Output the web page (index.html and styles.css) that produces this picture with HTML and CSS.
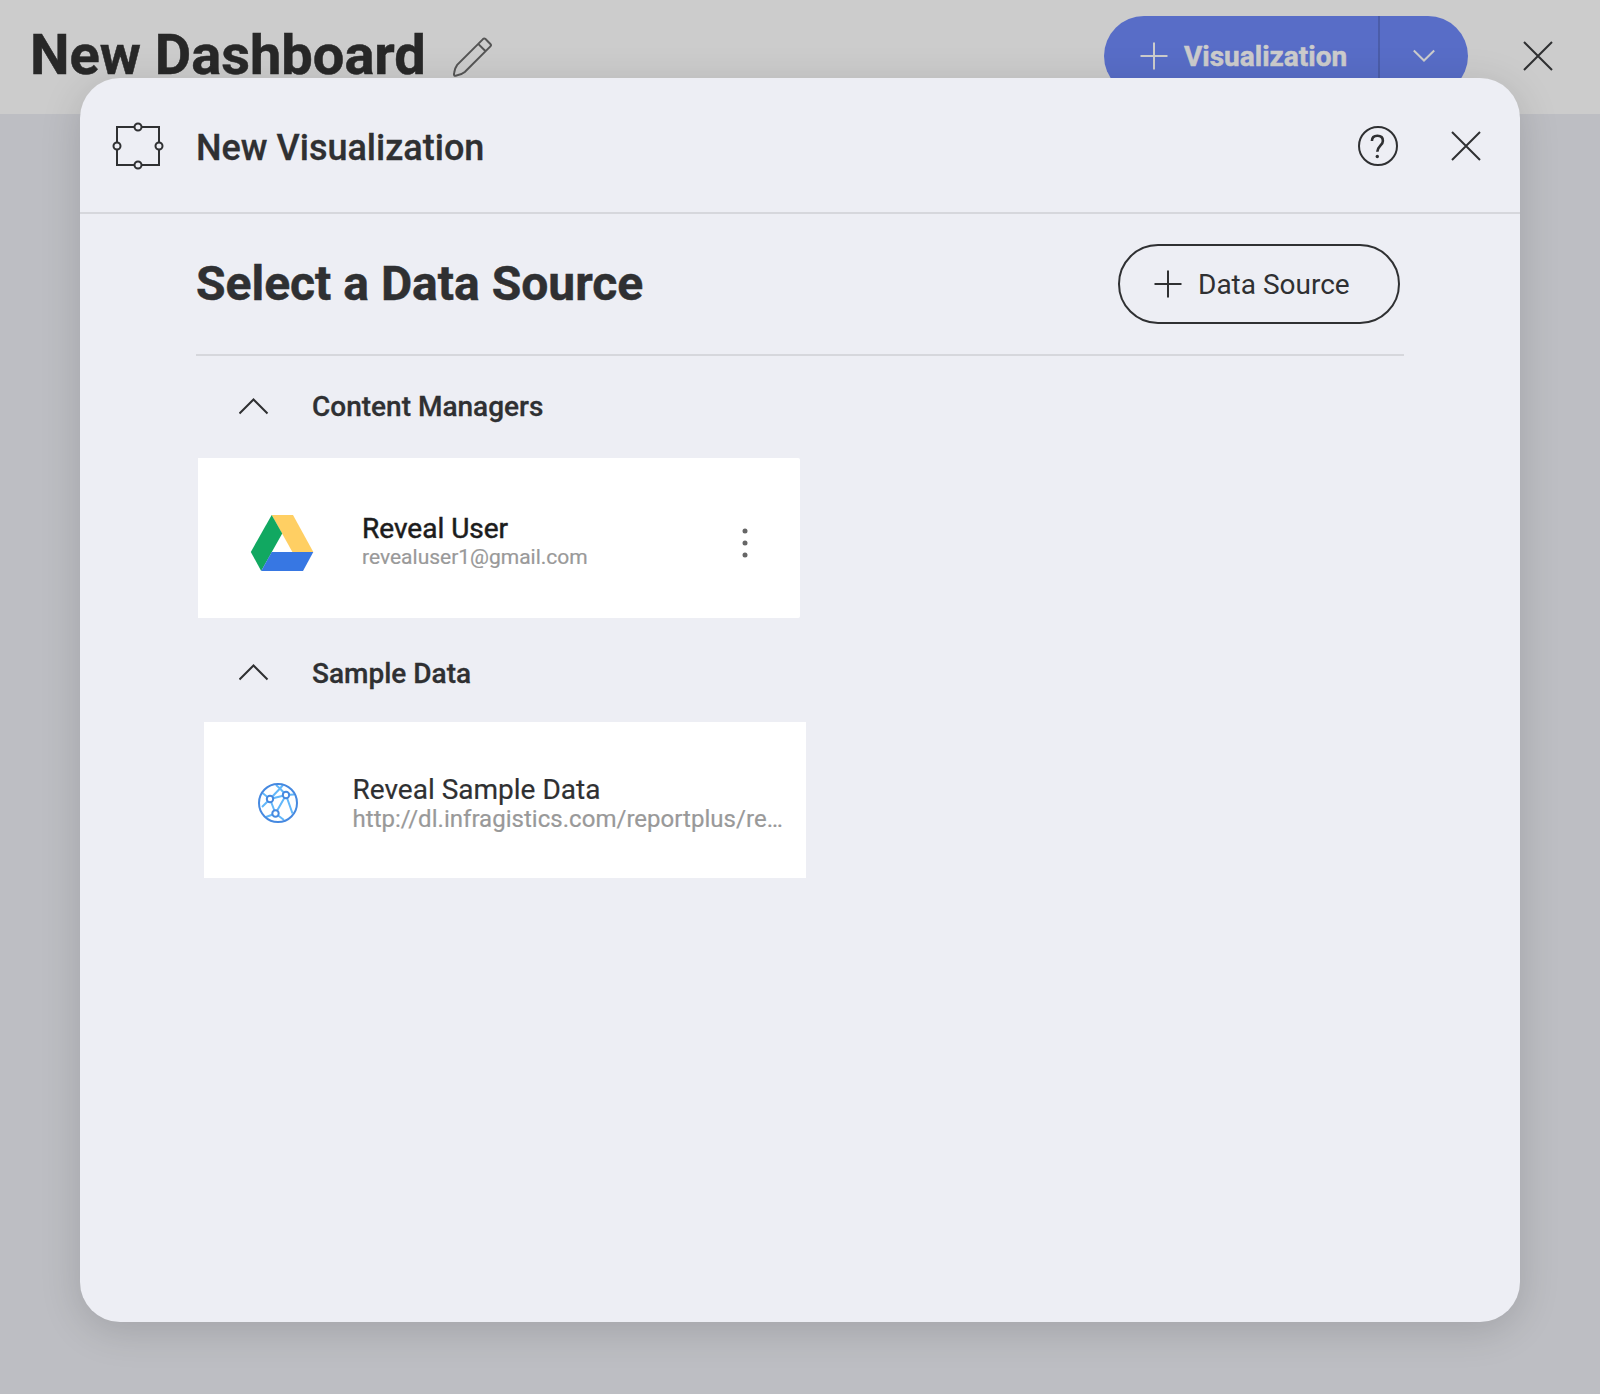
FILE: index.html
```html
<!DOCTYPE html>
<html lang="en">
<head>
<meta charset="utf-8">
<title>New Dashboard</title>
<link rel="stylesheet" href="styles.css">
</head>
<body>
<header class="topbar">
  <h1 class="topbar-title">New Dashboard</h1>
  <svg class="pencil" width="42" height="42" viewBox="0 0 42 42"><path d="M2.4 39.6 Q1.700 38.900 2.100 37 Q2.800 32 5.200 28.800 L31 3.100 Q32.200 2 33.500 3.100 L38.400 8 Q39.600 9.200 38.400 10.400 L12.800 36 Q9.500 38.700 4.500 39.500 Q3 40 2.400 39.600Z M26.200 7.900 L33.600 15.200"/></svg>
  <div class="split-button">
    <div class="split-main">
      <svg class="plus" width="28" height="28" viewBox="0 0 28 28"><path d="M14 .5V27.5M.5 14H27.5"/></svg>
      <span>Visualization</span>
    </div>
    <div class="split-arrow"><svg width="24" height="14" viewBox="0 0 24 14"><path d="M1.8 1.5 L12 11.5 L22.2 1.5"/></svg></div>
  </div>
  <svg class="close" width="30" height="30" viewBox="0 0 30 30"><path d="M1 1L29 29M29 1L1 29"/></svg>
</header>
<main class="dialog">
  <div class="dialog-header">
    <svg class="frame-icon" width="52" height="48" viewBox="0 0 52 48"><path d="M5 5H47V43H5Z"/><circle cx="26" cy="5" r="3.5"/><circle cx="5" cy="24" r="3.5"/><circle cx="47" cy="24" r="3.5"/><circle cx="26" cy="43" r="3.5"/></svg>
    <h2 class="dialog-title">New Visualization</h2>
    <svg class="help" width="40" height="40" viewBox="0 0 40 40"><circle cx="20" cy="20" r="19"/><path class="help-mark" d="M13.9 15 C14 11.4 16.4 9.8 19.4 9.8 C22.7 9.8 24.9 11.7 24.9 14.9 C24.9 19.4 19.3 20.2 19.3 25.8"/><circle class="help-dot" cx="19.3" cy="30.5" r="1.7"/></svg>
    <svg class="close" width="30" height="30" viewBox="0 0 30 30"><path d="M1 1L29 29M29 1L1 29"/></svg>
  </div>
  <div class="dialog-body">
    <div class="source-bar">
      <h3 class="source-title">Select a Data Source</h3>
      <div class="outline-button">
        <svg class="plus" width="28" height="28" viewBox="0 0 28 28"><path d="M14 .5V27.5M.5 14H27.5"/></svg>
        <span>Data Source</span>
      </div>
    </div>
    <div class="group-head group-head-managers">
      <svg width="30" height="17" viewBox="0 0 30 17"><path d="M.5 15.5 L14.5 1.500 L28.500 15.500"/></svg>
      <span>Content Managers</span>
    </div>
    <div class="card card-drive">
      <svg class="drive" width="64" height="58" viewBox="0 0 64 58"><path fill="#ffcf63" d="M21.7 1H43L63.3 38H42.4Z"/><path fill="#11a861" d="M21.7 1L32.2 19.4L11.2 57L.8 38Z"/><path fill="#3777e3" d="M21.7 38H63.3L53 57H11.2Z"/></svg>
      <div class="card-text">
        <div class="name">Reveal User</div>
        <div class="detail">revealuser1@gmail.com</div>
      </div>
      <svg class="dots" width="6" height="30" viewBox="0 0 6 30"><circle cx="3" cy="3" r="2.5"/><circle cx="3" cy="15" r="2.5"/><circle cx="3" cy="27" r="2.5"/></svg>
    </div>
    <div class="group-head group-head-samples">
      <svg width="30" height="17" viewBox="0 0 30 17"><path d="M.5 15.5 L14.5 1.500 L28.500 15.500"/></svg>
      <span>Sample Data</span>
    </div>
    <div class="card card-sample">
      <svg class="globe" width="40" height="40" viewBox="0 0 40 40"><path class="links" d="M4.500 10L12 16L4 24M12 16L22 5.500M18 2L22 5.500L25 2M22 5.500L28 12M12 16L28 12M28 12L36 11.500M12 16L17.500 30.500M28 12L17.500 30.500M28 12L34.500 30.500M17.500 30.500L8 34M17.500 30.500L26 37"/><circle class="ring" cx="20" cy="20" r="19"/><circle class="node" cx="12" cy="16" r="3.200"/><circle class="node" cx="28" cy="12" r="3.200"/><circle class="node" cx="17.500" cy="30.500" r="3.200"/></svg>
      <div class="card-text">
        <div class="name">Reveal Sample Data</div>
        <div class="detail">http://dl.infragistics.com/reportplus/re…</div>
      </div>
    </div>
  </div>
</main>
</body>
</html>
```
FILE: styles.css
```css
* { box-sizing: border-box; }
body {
  margin: 0;
  height: 1394px;
  overflow: hidden;
  background: #bdbec3;
  color: #2f3032;
  font-family: Roboto, "Liberation Sans", sans-serif;
}
svg { display: block; flex: none; fill: none; stroke: #2f3032; stroke-width: 2; }
h1, h2, h3 { margin: 0; font-weight: 700; white-space: nowrap; }
h1, h3, .split-main { -webkit-text-stroke: .5px currentColor; }

.topbar {
  display: flex;
  align-items: flex-start;
  height: 114px;
  padding: 16px 47px 0 30px;
  background: #ccc;
}
.topbar-title { width: 422px; font-size: 56px; line-height: 78px; color: #282828; }
.pencil { margin-top: 20px; stroke: #555; }
.split-button {
  display: flex;
  width: 364px;
  height: 80px;
  margin-left: auto;
  border-radius: 40px;
  background: #586dc7;
  color: #ccc;
}
.split-button svg { stroke: #ccc; }
.split-main {
  display: flex;
  align-items: center;
  width: 276px;
  padding-left: 36px;
  gap: 16px;
  border-right: 2px solid #4b5da9;
  font-size: 28px;
  font-weight: 700;
}
.split-arrow { display: flex; flex: 1; justify-content: center; padding-top: 33px; }
.topbar .close { margin: 25px 0 0 55px; }

.dialog {
  position: absolute;
  left: 80px;
  top: 78px;
  width: 1440px;
  height: 1244px;
  border-radius: 40px;
  background: #edeef4;
  box-shadow: 0 8px 40px rgba(0, 0, 0, .15);
}
.dialog-header {
  display: flex;
  align-items: center;
  height: 136px;
  padding: 2px 39px 0 32px;
  border-bottom: 2px solid #d6d7dc;
}
.frame-icon circle { fill: #edeef4; }
.dialog-title {
  margin: 3px 0 0 32px;
  font-size: 36px;
  font-weight: 500;
  -webkit-text-stroke: .3px currentColor;
}
.help { margin-left: auto; }
.help-mark { stroke-width: 2.6; }
.help-dot { fill: #2f3032; stroke: none; }
.dialog-header .close { margin-left: 53px; }

.dialog-body { padding: 0 116px; }
.source-bar {
  display: flex;
  justify-content: space-between;
  align-items: center;
  height: 142px;
  padding-right: 4px;
  border-bottom: 2px solid #d6d7dc;
}
.source-title { padding-bottom: 2px; font-size: 48px; }
.outline-button {
  display: flex;
  align-items: center;
  width: 282px;
  height: 80px;
  padding-left: 34px;
  gap: 16px;
  border: 2px solid #2f3032;
  border-radius: 40px;
  font-size: 28px;
}
.group-head {
  display: flex;
  align-items: center;
  padding-left: 43px;
  gap: 43px;
  font-size: 28px;
  font-weight: 500;
  -webkit-text-stroke: .3px currentColor;
}
.group-head-managers { height: 102px; padding-bottom: 2px; }
.group-head-samples { height: 104px; padding-top: 4px; }
.group-head-samples span { padding-top: 2px; }

.card { display: flex; width: 602px; background: #fff; white-space: nowrap; }
.card-drive { height: 160px; margin-left: 2px; padding: 56px 52px 0; border-radius: 0 2px 2px 0; }
.drive { stroke: none; }
.card-drive .card-text { margin: -1px 0 0 48px; }
.card-drive .name { color: #1c1c1c; -webkit-text-stroke: .5px currentColor; }
.dots { margin: 14px 0 0 auto; fill: #666; stroke: none; }
.card-sample { height: 156px; margin-left: 8px; padding: 52px 0 0 54px; }
.globe { margin-top: 9px; }
.card-sample .card-text { margin-left: 54.5px; }
.name { font-size: 28px; line-height: 32px; -webkit-text-stroke: .2px currentColor; }
.detail { color: #999; -webkit-text-stroke: .2px currentColor; }
.card-drive .detail { font-size: 21px; line-height: 24px; }
.card-sample .detail { font-size: 24px; line-height: 27px; letter-spacing: .03px; }
.links { stroke: #62b7fa; }
.ring { stroke: #4689e0; }
.node { fill: #fff; stroke: #4689e0; }
```
